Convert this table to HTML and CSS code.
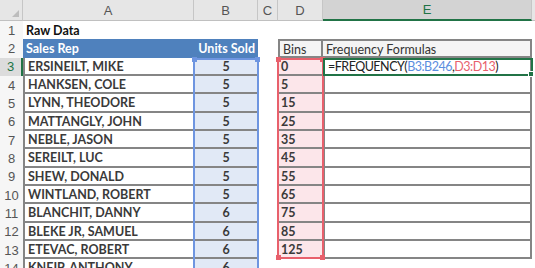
FILE: index.html
```html
<!DOCTYPE html>
<html lang="en">
<head>
    <meta charset="UTF-8">
    <title>Raw Data - Frequency</title>
    <link rel="stylesheet" href="styles.css">
</head>
<body>
    <div class="sheet">
        <!-- column headers -->
        <div class="ch corner"><span class="tri"></span></div>
        <div class="ch">A</div>
        <div class="ch">B</div>
        <div class="ch">C</div>
        <div class="ch">D</div>
        <div class="ch active">E</div>
        <div class="ch"></div>

        <!-- row 1 -->
        <div class="rh">1</div>
        <div class="c bold">Raw Data</div>
        <div class="c"></div><div class="c"></div><div class="c"></div><div class="c"></div><div class="c"></div>

        <!-- row 2 -->
        <div class="rh">2</div>
        <div class="c head">Sales Rep</div>
        <div class="c head right">Units Sold</div>
        <div class="c"></div>
        <div class="c tbl-head first">Bins</div>
        <div class="c tbl-head last">Frequency Formulas</div>
        <div class="c"></div>

        <!-- row 3 -->
        <div class="rh active">3</div>
        <div class="c name">ERSINEILT, MIKE</div>
        <div class="c units">5</div>
        <div class="c"></div>
        <div class="c bin">0</div>
        <div class="c freq formula">=FREQUENCY(<span class="ref-blue">B3:B246</span>,<span class="ref-red">D3:D13</span>)</div>
        <div class="c"></div>

        <div class="rh">4</div>
        <div class="c name">HANKSEN, COLE</div>
        <div class="c units">5</div>
        <div class="c"></div>
        <div class="c bin">5</div>
        <div class="c freq"></div>
        <div class="c"></div>

        <div class="rh">5</div>
        <div class="c name">LYNN, THEODORE</div>
        <div class="c units">5</div>
        <div class="c"></div>
        <div class="c bin">15</div>
        <div class="c freq"></div>
        <div class="c"></div>

        <div class="rh">6</div>
        <div class="c name">MATTANGLY, JOHN</div>
        <div class="c units">5</div>
        <div class="c"></div>
        <div class="c bin">25</div>
        <div class="c freq"></div>
        <div class="c"></div>

        <div class="rh">7</div>
        <div class="c name">NEBLE, JASON</div>
        <div class="c units">5</div>
        <div class="c"></div>
        <div class="c bin">35</div>
        <div class="c freq"></div>
        <div class="c"></div>

        <div class="rh">8</div>
        <div class="c name">SEREILT, LUC</div>
        <div class="c units">5</div>
        <div class="c"></div>
        <div class="c bin">45</div>
        <div class="c freq"></div>
        <div class="c"></div>

        <div class="rh">9</div>
        <div class="c name">SHEW, DONALD</div>
        <div class="c units">5</div>
        <div class="c"></div>
        <div class="c bin">55</div>
        <div class="c freq"></div>
        <div class="c"></div>

        <div class="rh">10</div>
        <div class="c name">WINTLAND, ROBERT</div>
        <div class="c units">5</div>
        <div class="c"></div>
        <div class="c bin">65</div>
        <div class="c freq"></div>
        <div class="c"></div>

        <div class="rh">11</div>
        <div class="c name">BLANCHIT, DANNY</div>
        <div class="c units">6</div>
        <div class="c"></div>
        <div class="c bin">75</div>
        <div class="c freq"></div>
        <div class="c"></div>

        <div class="rh">12</div>
        <div class="c name">BLEKE JR, SAMUEL</div>
        <div class="c units">6</div>
        <div class="c"></div>
        <div class="c bin">85</div>
        <div class="c freq"></div>
        <div class="c"></div>

        <div class="rh">13</div>
        <div class="c name">ETEVAC, ROBERT</div>
        <div class="c units">6</div>
        <div class="c"></div>
        <div class="c bin">125</div>
        <div class="c freq"></div>
        <div class="c"></div>

        <div class="rh">14</div>
        <div class="c name">KNEIP, ANTHONY</div>
        <div class="c units">6</div>
        <div class="c"></div><div class="c"></div><div class="c"></div><div class="c"></div>

        <!-- range highlights drawn over the cells -->
        <div class="range range-blue"><i class="h tl"></i><i class="h tr"></i></div>
        <div class="range range-red"><i class="h tl"></i><i class="h tr"></i><i class="h bl"></i><i class="h br"></i></div>
        <div class="range range-green"><i class="h br"></i></div>
    </div>
</body>
</html>
```

FILE: styles.css
```css
:root {
    --grid-line: #c6c6c6;
    --border: #858585;
    --header-bg: #e6e6e6;
    --excel-green: #217346;
    --sel-blue: #6e95e0;
    --sel-red: #e8606c;
}
* {
    margin: 0;
    padding: 0;
    box-sizing: border-box;
}
body {
    background: #ffffff;
    overflow: hidden;
    font-family: Lato, "Open Sans", sans-serif;
    font-size: 12.5px;
    font-weight: 700;
    color: #3a3a3a;
}
.sheet {
    position: relative;
    display: grid;
    grid-template-columns: 23px 171px 64px 20px 45px 209px 1fr;
    grid-template-rows: 21px repeat(14, 18.33px);
    width: 535px;
}
.ch {
    background: var(--header-bg);
    border-right: 1px solid var(--grid-line);
    border-bottom: 1px solid #c0c0c0;
    display: flex;
    align-items: center;
    justify-content: center;
    font-family: "Liberation Sans", Arial, sans-serif;
    font-weight: 400;
    font-size: 13px;
    color: #555;
}
.ch.corner {
    position: relative;
}
.tri {
    position: absolute;
    right: 3px;
    bottom: 3px;
    width: 0;
    height: 0;
    border-left: 7px solid transparent;
    border-bottom: 7px solid #bdbdbd;
}
.ch.active {
    background: #d3d3d3;
    color: var(--excel-green);
    border-bottom: 2px solid var(--excel-green);
}
.rh {
    background: #f6f6f6;
    display: flex;
    align-items: center;
    justify-content: center;
    font-family: "Liberation Sans", Arial, sans-serif;
    font-weight: 400;
    font-size: 13px;
    color: #555;
}
.rh.active {
    background: #dcdcdc;
    color: var(--excel-green);
    border-right: 2px solid var(--excel-green);
}
.c {
    display: flex;
    align-items: center;
    padding: 1px 3px 0;
    white-space: nowrap;
    overflow: visible;
}
.bold {
    color: #111;
}
.head {
    background: #4f81bd;
    color: #ffffff;
}
.right {
    justify-content: flex-end;
}
.tbl-head {
    background: #f4f4f4;
    border-top: 2px solid var(--border);
    border-bottom: 2px solid var(--border);
    font-weight: 400;
    color: #333;
}
.tbl-head.first {
    border-left: 2px solid var(--border);
    border-right: 2px solid var(--border);
}
.tbl-head.last {
    border-right: 2px solid var(--border);
}
.name {
    border-left: 2px solid var(--border);
    border-bottom: 2px solid var(--border);
}
.units {
    background: #e1e9f6;
    border-bottom: 2px solid var(--border);
    justify-content: center;
}
.bin {
    background: #fce6ea;
    border-bottom: 2px solid var(--border);
}
.freq {
    border-left: 2px solid var(--border);
    border-bottom: 2px solid var(--border);
    border-right: 2px solid var(--border);
    font-weight: 400;
    color: #222;
}
.formula {
    letter-spacing: -0.5px;
}
.ref-blue {
    color: #5b8ee0;
}
.ref-red {
    color: #e8606c;
}
.range {
    position: absolute;
    inset: 0;
    pointer-events: none;
}
.range-blue {
    grid-column: 3 / 4;
    grid-row: 4 / 16;
    border: 2px solid var(--sel-blue);
    border-bottom: none;
    margin-left: -1px;
    margin-right: -1px;
}
.range-red {
    grid-column: 5 / 6;
    grid-row: 4 / 15;
    border: 2px solid var(--sel-red);
    margin-left: -1px;
    margin-right: -1px;
}
.range-green {
    grid-column: 6 / 7;
    grid-row: 4 / 5;
    border: 2px solid var(--excel-green);
    margin-right: -1px;
}
.h {
    position: absolute;
    width: 5px;
    height: 5px;
}
.range-blue .h { background: var(--sel-blue); }
.range-red .h { background: var(--sel-red); }
.range-green .h { background: var(--excel-green); border: 1px solid #fff; width: 6px; height: 6px; }
.tl { top: -3px; left: -3px; }
.tr { top: -3px; right: -3px; }
.bl { bottom: -3px; left: -3px; }
.br { bottom: -3px; right: -3px; }
```
